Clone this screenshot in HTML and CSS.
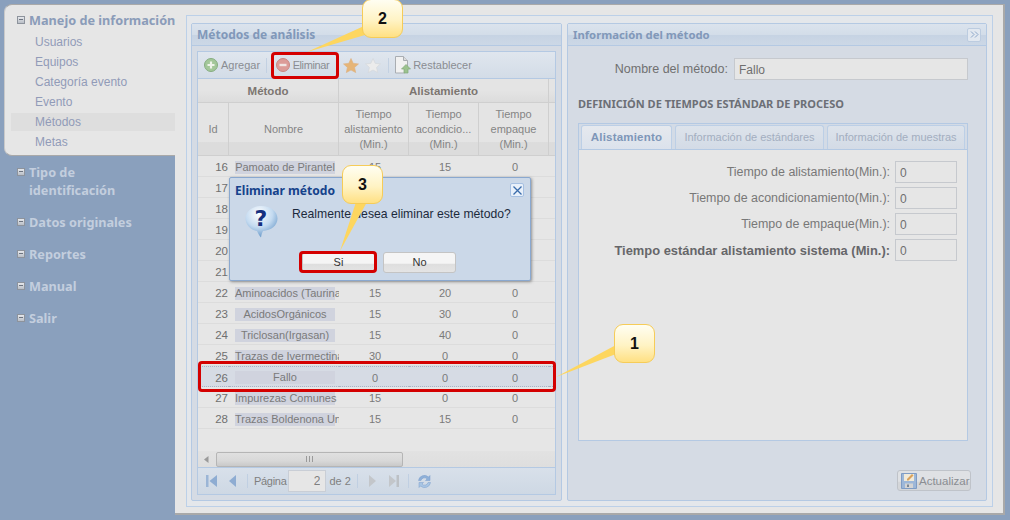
FILE: index.html
```html
<!DOCTYPE html>
<html lang="es">
<head>
    <meta charset="UTF-8">
    <title>Métodos de análisis</title>
    <link rel="stylesheet" href="styles.css">
</head>
<body>
    <div class="page">
        <div class="sidebar">
            <div class="nav-card">
                <div class="nav-head nav-head-active"><span class="tree-box"></span><span>Manejo de información</span></div>
                <div class="nav-item">Usuarios</div>
                <div class="nav-item">Equipos</div>
                <div class="nav-item">Categoría evento</div>
                <div class="nav-item">Evento</div>
                <div class="nav-item nav-item-current">Métodos</div>
                <div class="nav-item">Metas</div>
            </div>
            <div class="nav-list">
                <div class="nav-head"><span class="tree-box"></span><span>Tipo de identificación</span></div>
                <div class="nav-head"><span class="tree-box"></span><span>Datos originales</span></div>
                <div class="nav-head"><span class="tree-box"></span><span>Reportes</span></div>
                <div class="nav-head"><span class="tree-box"></span><span>Manual</span></div>
                <div class="nav-head"><span class="tree-box"></span><span>Salir</span></div>
            </div>
        </div>

        <div class="main">
            <div class="outer">
                <div class="panel panel-left">
                    <div class="panel-title">Métodos de análisis</div>
                    <div class="panel-body">
                        <div class="grid">
                            <div class="toolbar">
                                <svg class="ico tb-add" width="14" height="14" viewBox="0 0 14 14"><circle cx="7" cy="7" r="6.5" fill="#a3c79a" stroke="#86ad80"/><path d="M7 3.5v7M3.5 7h7" stroke="#eef3ea" stroke-width="2.2"/></svg>
                                <span class="tb-text tb-agregar">Agregar</span>
                                <span class="tb-sep sep-a"></span>
                                <svg class="ico tb-del" width="14" height="14" viewBox="0 0 14 14"><circle cx="7" cy="7" r="6.5" fill="#dc9c98" stroke="#c98682"/><path d="M3.5 7h7" stroke="#f1e6e4" stroke-width="2.4"/></svg>
                                <span class="tb-text tb-eliminar">Eliminar</span>
                                <svg class="ico star-a" width="16" height="15" viewBox="0 0 16 15"><path d="M8 .5l2.2 4.8 5.3.6-3.9 3.5 1.1 5.2L8 12l-4.7 2.6 1.1-5.2L.5 5.900l5.300-.6z" fill="#e6b577" stroke="#ddb183" stroke-width=".6"/></svg>
                                <svg class="ico star-b" width="16" height="15" viewBox="0 0 16 15"><path d="M8 .5l2.200 4.800 5.300.6-3.900 3.500 1.100 5.200L8 12l-4.700 2.600 1.100-5.200L.5 5.900l5.300-.6z" fill="#ececec" stroke="#d6d9dd" stroke-width=".8"/></svg>
                                <span class="tb-sep sep-b"></span>
                                <svg class="ico tb-doc" width="17" height="18" viewBox="0 0 17 18"><path d="M1.500.5h8l4 4v8h-3v4.500h-9z" fill="#f1f1f1" stroke="#a9adb2"/><path d="M9.500.5v4h4" fill="#dcdcdc" stroke="#a9adb2"/><path d="M12 8.500l4.500 4.500h-2.500v4h-4v-4H7.500z" fill="#9cc28f" stroke="#83a97a" stroke-width=".7"/></svg>
                                <span class="tb-text tb-reset">Restablecer</span>
                            </div>

                            <table class="head-table">
                                <colgroup><col class="c-id"><col class="c-name"><col class="c-t"><col class="c-t"><col class="c-t"><col></colgroup>
                                <tr class="group-row">
                                    <th colspan="2">Método</th>
                                    <th colspan="3">Alistamiento</th>
                                    <th class="filler"></th>
                                </tr>
                                <tr class="col-row">
                                    <th>Id</th>
                                    <th>Nombre</th>
                                    <th>Tiempo alistamiento (Min.)</th>
                                    <th>Tiempo acondicio... (Min.)</th>
                                    <th>Tiempo empaque (Min.)</th>
                                    <th class="filler"></th>
                                </tr>
                            </table>

                            <div class="grid-rows">
                                <table class="body-table">
                                    <colgroup><col class="c-id"><col class="c-name"><col class="c-t"><col class="c-t"><col class="c-t"><col></colgroup>
                                    <tr><td class="num">16</td><td class="name"><span>Pamoato de Pirantel</span></td><td>15</td><td>15</td><td>0</td><td></td></tr>
                                    <tr><td class="num">17</td><td class="name"></td><td></td><td></td><td></td><td></td></tr>
                                    <tr><td class="num">18</td><td class="name"></td><td></td><td></td><td></td><td></td></tr>
                                    <tr><td class="num">19</td><td class="name"></td><td></td><td></td><td></td><td></td></tr>
                                    <tr><td class="num">20</td><td class="name"></td><td></td><td></td><td></td><td></td></tr>
                                    <tr><td class="num">21</td><td class="name"></td><td></td><td></td><td></td><td></td></tr>
                                    <tr><td class="num">22</td><td class="name"><span>Aminoacidos (Taurina)</span></td><td>15</td><td>20</td><td>0</td><td></td></tr>
                                    <tr><td class="num">23</td><td class="name"><span>AcidosOrgánicos</span></td><td>15</td><td>30</td><td>0</td><td></td></tr>
                                    <tr><td class="num">24</td><td class="name"><span>Triclosan(Irgasan)</span></td><td>15</td><td>40</td><td>0</td><td></td></tr>
                                    <tr><td class="num">25</td><td class="name"><span>Trazas de Ivermectina</span></td><td>30</td><td>0</td><td>0</td><td></td></tr>
                                    <tr class="selected"><td class="num">26</td><td class="name"><span>Fallo</span></td><td>0</td><td>0</td><td>0</td><td></td></tr>
                                    <tr><td class="num">27</td><td class="name"><span>Impurezas Comunes</span></td><td>15</td><td>0</td><td>0</td><td></td></tr>
                                    <tr><td class="num">28</td><td class="name"><span>Trazas Boldenona Un</span></td><td>15</td><td>15</td><td>0</td><td></td></tr>
                                </table>
                            </div>

                            <div class="hscroll">
                                <svg class="hscroll-arrow" width="5" height="7" viewBox="0 0 5 7"><path d="M4.500 0v7L0 3.500z" fill="#9a9a9a"/></svg>
                                <div class="hscroll-thumb"><span class="grip"></span></div>
                            </div>

                            <div class="pager">
                                <svg class="ico pg-first" width="11" height="12" viewBox="0 0 11 12"><path d="M0 0h2.500v12H0z" fill="#9bb5d6"/><path d="M11 0v12L3.500 6z" fill="#8eacd2"/></svg>
                                <svg class="ico pg-prev" width="7" height="12" viewBox="0 0 7 12"><path d="M7 0v12L0 6z" fill="#8eacd2"/></svg>
                                <span class="pg-sep pg-sep-a"></span>
                                <span class="pg-label">Página</span>
                                <input class="pg-input" value="2" readonly>
                                <span class="pg-de">de 2</span>
                                <span class="pg-sep pg-sep-b"></span>
                                <svg class="ico pg-next" width="7" height="12" viewBox="0 0 7 12"><path d="M0 0v12l7-6z" fill="#c3c6ca"/></svg>
                                <svg class="ico pg-last" width="10" height="12" viewBox="0 0 10 12"><path d="M0 0v12l7-6z" fill="#c3c6ca"/><path d="M7.500 0H10v12H7.500z" fill="#bcc0c5"/></svg>
                                <span class="pg-sep pg-sep-c"></span>
                                <svg class="ico pg-refresh" width="15" height="15" viewBox="0 0 15 15"><path d="M1.500 6.500A6 6 0 0 1 11.500 3l1.500-1.500V6.500H8.500L10 5A3.500 3.500 0 0 0 4 6.500z" fill="#8eb0d8" stroke="#7c9fcc" stroke-width=".5"/><path d="M13.500 8.500A6 6 0 0 1 3.500 12L2 13.500V8.500h4.500L5 10a3.500 3.500 0 0 0 6-1.500z" fill="#a8c5e4" stroke="#7c9fcc" stroke-width=".5"/></svg>
                            </div>
                        </div>
                    </div>
                </div>

                <div class="panel panel-right">
                    <div class="panel-title">
                        <span>Información del método</span>
                        <span class="collapse-btn">
                            <svg width="9" height="7" viewBox="0 0 9 7"><path d="M1 .5l3 3-3 3M5 .5l3 3-3 3" fill="none" stroke="#8ba5c8"/></svg>
                        </span>
                    </div>
                    <div class="form-body">
                        <div class="name-row">
                            <label class="name-label">Nombre del método:</label>
                            <input class="text-input name-input" value="Fallo" readonly>
                        </div>
                        <div class="section-title">DEFINICIÓN DE TIEMPOS ESTÁNDAR DE PROCESO</div>
                        <div class="tabs">
                            <div class="tab-strip">
                                <div class="tab tab-active tab-one">Alistamiento</div>
                                <div class="tab tab-two">Información de estándares</div>
                                <div class="tab tab-three">Información de muestras</div>
                            </div>
                            <div class="tab-body">
                                <div class="field"><label>Tiempo de alistamiento(Min.):</label><input class="text-input num-input" value="0" readonly></div>
                                <div class="field"><label>Tiempo de acondicionamiento(Min.):</label><input class="text-input num-input" value="0" readonly></div>
                                <div class="field"><label>Tiempo de empaque(Min.):</label><input class="text-input num-input" value="0" readonly></div>
                                <div class="field field-strong"><label>Tiempo estándar alistamiento sistema (Min.):</label><input class="text-input num-input" value="0" readonly></div>
                            </div>
                        </div>
                        <div class="form-actions">
                            <button class="save-btn">
                                <svg width="16" height="16" viewBox="0 0 16 16"><path d="M.5.500h15v15H.5z" fill="#9db7d8" stroke="#7f9cc4"/><path d="M3 1h10v7H3z" fill="#f1ead9"/><path d="M6 6l5-5 1.500 1.500-5 5H6z" fill="#d9a25c"/><path d="M4 10.500h8V15H4z" fill="#d4d4d4"/><path d="M6 11.500h2V14H6z" fill="#7c8794"/></svg>
                                <span>Actualizar</span>
                            </button>
                        </div>
                    </div>
                </div>
            </div>
        </div>
    </div>

    <div class="dialog">
        <div class="dialog-title">
            <span>Eliminar método</span>
            <span class="dialog-close">
                <svg width="9" height="9" viewBox="0 0 9 9"><path d="M.5.500l8 8M8.500.500l-8 8" stroke="#3a6cab" stroke-width="1.300"/></svg>
            </span>
        </div>
        <div class="dialog-body">
            <svg class="dialog-icon" width="33" height="32" viewBox="0 0 33 32">
                <defs><radialGradient id="bubble" cx=".42" cy=".25" r=".85"><stop offset="0" stop-color="#ffffff"/><stop offset=".5" stop-color="#c3daf0"/><stop offset="1" stop-color="#4f86bd"/></radialGradient></defs>
                <path d="M16.500 0C7.500 0 .5 5.600.5 12.500S7 24.500 12 25c.8 2 2.200 4.500 4 6.500 .4-2.500 1-4.500 2-6.500 8-.5 14.500-5.500 14.500-12.500S25.500 0 16.500 0z" fill="url(#bubble)"/>
                <text x="16" y="20" class="dialog-mark">?</text>
            </svg>
            <div class="dialog-text">Realmente desea eliminar este método?</div>
        </div>
        <div class="dialog-buttons">
            <button class="dialog-btn btn-si">Si</button>
            <button class="dialog-btn btn-no">No</button>
        </div>
    </div>

    <svg class="leaders" width="1010" height="520" viewBox="0 0 1010 520">
        <path d="M364 26l1 9-58 17z" fill="#fdd65f"/>
        <path d="M356 202h11l-27 49z" fill="#fdd65f"/>
        <path d="M616 345v9l-60 23z" fill="#fdd65f"/>
    </svg>

    <div class="mark mark-delete"></div>
    <div class="mark mark-row"></div>
    <div class="mark mark-si"></div>

    <div class="callout callout-one">1</div>
    <div class="callout callout-two">2</div>
    <div class="callout callout-three">3</div>
</body>
</html>
```

FILE: styles.css
```css
* {
    margin: 0;
    padding: 0;
    box-sizing: border-box;
}

html, body {
    height: 100%;
    overflow: hidden;
}

body {
    position: relative;
    background-color: #8aa0bd;
    font-family: "Liberation Sans", Arial, sans-serif;
    font-size: 12px;
    color: #6f6f6f;
}

.page {
    display: flex;
    height: 520px;
    padding: 4px 6px 5px 0;
}

/* sidebar */

.sidebar {
    width: 175px;
    flex-shrink: 0;
}

.nav-card {
    margin-left: 4px;
    height: 152px;
    padding-top: 6px;
    background-color: #e6e6e6;
    border-top: 1px solid #a9a9a9;
    border-bottom: 1px solid #a9a9a9;
    border-left: 1px solid #c9c9c9;
    border-radius: 8px 0 0 8px;
}

.nav-head {
    display: flex;
    align-items: flex-start;
    gap: 4px;
    margin-left: 17px;
    font-family: "Noto Sans", sans-serif;
    font-size: 12.7px;
    font-weight: bold;
    line-height: 18px;
    color: #c3cede;
    margin-bottom: 14px;
}

.nav-head-active {
    margin-left: 12px;
    margin-bottom: 3px;
    color: #8b9cb9;
    white-space: nowrap;
}

.tree-box {
    flex-shrink: 0;
    width: 8px;
    height: 8px;
    margin-top: 5px;
    background: linear-gradient(#e6e8ec, #b9bec6);
    border: 1px solid #8d939c;
    position: relative;
}

.tree-box::after {
    content: "";
    position: absolute;
    left: 1px;
    right: 1px;
    top: 2px;
    height: 1px;
    background-color: #6d7480;
}

.nav-item {
    height: 20px;
    line-height: 20px;
    padding-left: 30px;
    color: #919bb8;
}

.nav-item-current {
    margin-left: 6px;
    padding-left: 24px;
    background: #dedede;
    height: 18px;
    line-height: 18px;
    margin-top: 1px;
    margin-bottom: 1px;
}

.nav-list {
    padding-top: 7px;
}

.nav-list .nav-head span:last-child {
    width: 110px;
}

/* main area */

.main {
    flex: 1;
    padding: 10px 10px 6px 11px;
    background-color: #e6e6e6;
    border-top: 1px solid #a9a9a9;
    border-right: 2px solid #a9a9a9;
    border-bottom: 2px solid #a9a9a9;
}

.outer {
    display: flex;
    gap: 5px;
    height: 100%;
    padding: 7px 5px 5px 4px;
    background-color: #e4e7eb;
    border: 1px solid #bcd0e8;
}

.panel {
    display: flex;
    flex-direction: column;
    background-color: #d5dbe4;
    border: 1px solid #b4c9e3;
    border-radius: 2px;
}

.panel-left {
    width: 371px;
}

.panel-right {
    flex: 1;
}

.panel-title {
    display: flex;
    justify-content: space-between;
    align-items: center;
    height: 22px;
    padding: 0 5px;
    font-family: "Noto Sans", sans-serif;
    font-size: 12px;
    font-weight: bold;
    color: #8198b9;
    background: linear-gradient(#dbe3ed 0%, #d3dde9 50%, #c6d3e3 52%, #ccd8e6 100%);
    border-bottom: 1px solid #b4c9e3;
}

.panel-right .panel-title {
    font-size: 11.3px;
}

.panel-body {
    flex: 1;
    padding: 5px 5px 5px 5px;
}

/* grid */

.grid {
    display: flex;
    flex-direction: column;
    height: 100%;
    border: 1px solid #b4c9e3;
    background-color: #e6e6e6;
}

.toolbar {
    display: flex;
    align-items: center;
    height: 27px;
    flex-shrink: 0;
    background: linear-gradient(#e0e6ee, #d3dce7);
    border-bottom: 1px solid #b4c9e3;
    font-size: 11px;
}

.ico {
    flex-shrink: 0;
}

.tb-text {
    color: #8a8d92;
}

.tb-add { margin-left: 6px; }
.tb-agregar { margin-left: 3px; }
.tb-del { margin-left: 8.5px; }
.tb-eliminar { margin-left: 3px; letter-spacing: -0.4px; }
.star-a { margin-left: 14px; }
.star-b { margin-left: 6px; }
.tb-doc { margin-left: 5px; }
.tb-reset { margin-left: 2px; }

.tb-sep {
    width: 1px;
    height: 15px;
    background-color: #c3d1e2;
}

.sep-a { margin-left: 6px; }
.sep-b { margin-left: 7px; }

.head-table, .body-table {
    width: 100%;
    table-layout: fixed;
    border-collapse: separate;
    border-spacing: 0;
}

.c-id { width: 31px; }
.c-name { width: 110px; }
.c-t { width: 70px; }

.head-table th {
    font-weight: normal;
    font-size: 11px;
    color: #858585;
    text-align: center;
    background: linear-gradient(#e4e4e4 0%, #e4e4e4 50%, #dcdcdc 100%);
    border-right: 1px solid #cfcfcf;
    border-bottom: 1px solid #cfcfcf;
}

.group-row th {
    height: 24px;
    font-size: 11.5px;
    font-weight: bold;
    color: #7c7671;
}

.col-row th {
    height: 53px;
    line-height: 15px;
    padding: 0 3px;
    background: linear-gradient(#e4e4e4 0%, #e4e4e4 75%, #dcdcdc 76%, #dcdcdc 100%);
}

.head-table .filler {
    border-right: 0;
}

.grid-rows {
    flex: 1;
    min-height: 0;
    overflow: hidden;
}

.body-table td {
    height: 21px;
    padding: 2px 0 0 2px;
    text-align: center;
    font-size: 11px;
    color: #7a7a7a;
    border-bottom: 1px solid #dcdcdc;
    overflow: hidden;
    white-space: nowrap;
}

.body-table .num {
    text-align: right;
    padding-left: 0;
    padding-right: 1px;
    font-size: 11.5px;
    color: #6f6f6f;
}

.body-table .name {
    padding-left: 6px;
    text-align: left;
}

.name span {
    display: inline-block;
    width: 100px;
    height: 13px;
    line-height: 13px;
    text-align: center;
    background-color: #d0d3de;
    vertical-align: middle;
    white-space: nowrap;
}

.name span:empty {
    display: none;
}

.selected td {
    background-color: #d6dbe4;
    border-top: 1px dotted #a8b3c6;
    border-bottom: 1px dotted #a8b3c6;
}

.hscroll {
    display: flex;
    align-items: center;
    height: 16px;
    flex-shrink: 0;
    background: linear-gradient(#e2e2e2, #dedede);
}

.hscroll-arrow {
    margin-left: 6px;
}

.hscroll-thumb {
    display: flex;
    align-items: center;
    justify-content: center;
    width: 187px;
    height: 15px;
    margin-left: 7px;
    background: linear-gradient(#e0e0e0 0%, #d8d8d8 60%, #c9c9c9 100%);
    border: 1px solid #b5b5b5;
    border-radius: 2px;
}

.grip {
    width: 7px;
    height: 6px;
    background: repeating-linear-gradient(90deg, #9a9a9a 0 1px, transparent 1px 3px);
}

.pager {
    display: flex;
    align-items: center;
    height: 27px;
    flex-shrink: 0;
    background: linear-gradient(#d8e0ea, #ced8e4);
    border-top: 1px solid #b4c9e3;
    font-size: 11px;
    color: #7f7f7f;
}

.pg-first { margin-left: 8px; }
.pg-prev { margin-left: 12px; }
.pg-sep {
    width: 1px;
    height: 14px;
    background-color: #c0cfe2;
}
.pg-sep-a { margin-left: 11px; }
.pg-label { margin-left: 6px; letter-spacing: -0.3px; }
.pg-input {
    width: 38px;
    height: 22px;
    margin-left: 2px;
    padding-right: 5px;
    text-align: right;
    font: 12px "Liberation Sans", Arial, sans-serif;
    color: #7f7f7f;
    background-color: #e6e6e6;
    border: 1px solid #c9ced6;
}
.pg-de { margin-left: 3px; }
.pg-sep-b { margin-left: 6px; }
.pg-next { margin-left: 11px; }
.pg-last { margin-left: 13px; }
.pg-sep-c { margin-left: 9px; }
.pg-refresh { margin-left: 8px; }

/* right panel */

.collapse-btn {
    display: flex;
    align-items: center;
    justify-content: center;
    width: 14px;
    height: 14px;
    background-color: #e2e8f0;
    border: 1px solid #bccce0;
    border-radius: 2px;
}

.form-body {
    flex: 1;
    display: flex;
    flex-direction: column;
    padding: 12px 18px 8px 10px;
}

.name-row {
    display: flex;
    align-items: center;
    justify-content: flex-end;
    gap: 6px;
}

.name-label {
    font-size: 12.5px;
    color: #707070;
}

.text-input {
    height: 22px;
    padding: 2px 4px 0;
    font: 12px "Liberation Sans", Arial, sans-serif;
    color: #6f6f6f;
    background-color: #e6e6e6;
    border: 1px solid #c6c9ce;
}

.name-input {
    width: 234px;
}

.section-title {
    margin-top: 17px;
    font-family: "Noto Sans", sans-serif;
    font-size: 11px;
    font-weight: bold;
    line-height: 14px;
    white-space: nowrap;
    color: #6c6f76;
}

.tabs {
    height: 318px;
    margin-top: 12px;
    border: 1px solid #b4c9e3;
    display: flex;
    flex-direction: column;
}

.tab-strip {
    display: flex;
    height: 25px;
    padding: 1px 2px 0;
    gap: 3px;
    background-color: #d3dbe6;
}

.tab {
    height: 24px;
    line-height: 22px;
    text-align: center;
    font-size: 11px;
    color: #a3aec0;
    background: linear-gradient(#dde3eb, #d3dbe6);
    border: 1px solid #bccfe6;
    border-bottom: 0;
    border-radius: 3px 3px 0 0;
}

.tab-active {
    font-size: 11.5px;
    letter-spacing: 0.2px;
    font-weight: bold;
    color: #7e96b8;
    background: linear-gradient(#e6e9ee, #dbe2ec);
}

.tab-one { width: 91px; }
.tab-two { width: 149px; }
.tab-three { width: 138px; }

.tab-body {
    flex: 1;
    padding: 11px 10px 0;
    background-color: #e6e6e6;
    border-top: 1px solid #b4c9e3;
}

.field {
    display: flex;
    align-items: center;
    justify-content: flex-end;
    gap: 5px;
    height: 22px;
    margin-bottom: 4px;
    font-size: 12.45px;
    color: #787878;
}

.field-strong {
    font-size: 12.9px;
    font-weight: bold;
    color: #66666a;
}

.num-input {
    width: 62px;
}

.form-actions {
    display: flex;
    justify-content: flex-end;
    margin-top: 29px;
    margin-right: -3px;
}

.save-btn {
    display: flex;
    align-items: center;
    gap: 2px;
    width: 74px;
    height: 21px;
    padding-left: 3px;
    font: 11.5px "Liberation Sans", Arial, sans-serif;
    color: #8a8d92;
    background: linear-gradient(#dfe1e4 0%, #dfe1e4 55%, #d4d6d9 56%, #d4d6d9 100%);
    border: 1px solid #bfc3c9;
    border-radius: 3px;
}

/* dialog, over the page */

.dialog {
    position: absolute;
    left: 229px;
    top: 177px;
    width: 302px;
    height: 104px;
    display: flex;
    flex-direction: column;
    background-color: #cbd8e8;
    border: 1px solid #8aa8cf;
    border-radius: 2px;
    box-shadow: 1px 1px 3px rgba(60, 60, 60, 0.5);
}

.dialog-title {
    display: flex;
    justify-content: space-between;
    align-items: center;
    height: 22px;
    margin-top: 1px;
    padding: 0 6px 0 5px;
    font-family: "Noto Sans", sans-serif;
    font-size: 12.1px;
    font-weight: bold;
    color: #15428b;
}

.dialog-close {
    display: flex;
    align-items: center;
    justify-content: center;
    width: 14px;
    height: 14px;
    background-color: #e8f0fa;
    border: 1px solid #a6c0e2;
    border-radius: 2px;
}

.dialog-body {
    flex: 1;
    display: flex;
    align-items: flex-start;
    padding: 5px 0 0 15px;
}

.dialog-icon {
    flex-shrink: 0;
}

.dialog-mark {
    font-family: "DejaVu Sans", sans-serif;
    font-size: 22px;
    font-weight: bold;
    fill: #15307f;
    text-anchor: middle;
}

.dialog-text {
    margin-left: 14px;
    margin-top: 1px;
    line-height: 14px;
    font-size: 12.2px;
    color: #1c2a3c;
}

.dialog-buttons {
    display: flex;
    align-items: center;
    gap: 8px;
    height: 30px;
    padding: 0 0 6px 72px;
}

.dialog-btn {
    width: 73px;
    height: 21px;
    font: 11px "Liberation Sans", Arial, sans-serif;
    color: #333;
    background: linear-gradient(#f5f5f5 0%, #f5f5f5 55%, #dedede 56%, #e4e4e4 100%);
    border: 1px solid #c4c4c4;
    border-radius: 3px;
}

/* tutorial marks over everything */

.leaders {
    position: absolute;
    left: 0;
    top: 0;
    pointer-events: none;
}

.mark {
    position: absolute;
    border: 3px solid #d40000;
    border-radius: 4px;
    pointer-events: none;
}

.mark-delete { left: 271px; top: 52px; width: 68px; height: 27px; }
.mark-row { left: 198px; top: 361px; width: 358px; height: 31px; }
.mark-si { left: 299px; top: 251px; width: 78px; height: 22px; }

.callout {
    position: absolute;
    display: flex;
    align-items: center;
    justify-content: center;
    width: 41px;
    height: 39px;
    padding-bottom: 0;
    font-size: 16px;
    font-weight: bold;
    color: #111;
    background: linear-gradient(#fffef2, #fff3c4 55%, #ffe083);
    border: 1px solid #f6cc58;
    border-radius: 9px;
}

.callout-one { left: 614px; top: 324px; }
.callout-two { left: 362px; top: -1px; }
.callout-three { left: 342px; top: 165px; }
```
